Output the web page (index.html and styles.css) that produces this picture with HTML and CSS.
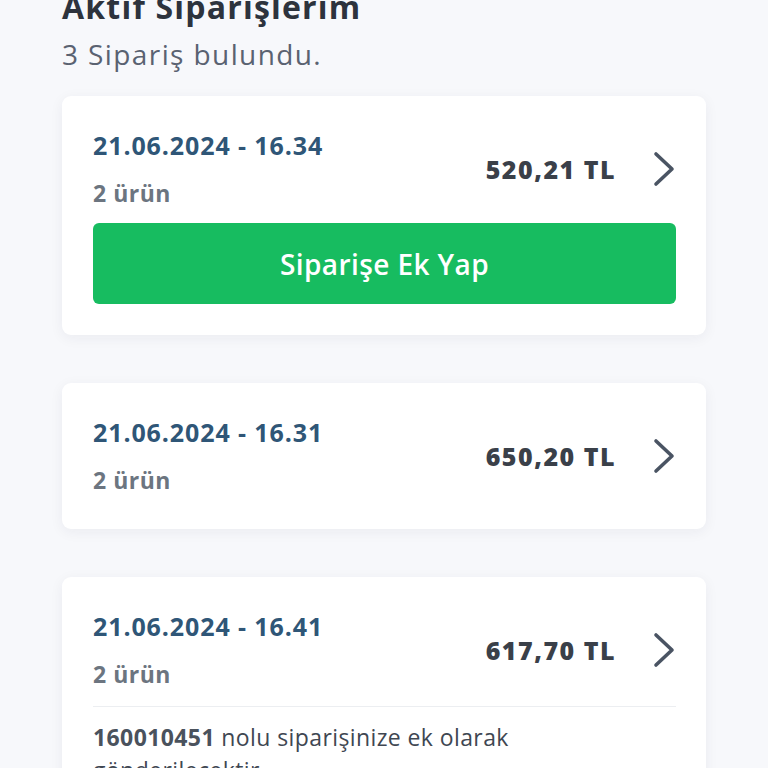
FILE: index.html
```html
<!DOCTYPE html>
<html lang="tr">
<head>
    <meta charset="UTF-8">
    <title>Aktif Siparişlerim</title>
    <link rel="stylesheet" href="styles.css">
</head>
<body>
<div class="page">
    <div class="page-head">
        <h1 class="page-title">Aktif Siparişlerim</h1>
        <p class="page-sub">3 Sipariş bulundu.</p>
    </div>

    <div class="order-card">
        <div class="order-row">
            <div class="order-info">
                <div class="order-date">21.06.2024 - 16.34</div>
                <div class="order-count">2 ürün</div>
            </div>
            <div class="order-price">520,21 TL</div>
            <svg class="order-arrow" width="24" height="36" viewBox="0 0 24 36">
                <polyline points="4,3 20,18 4,33" fill="none" stroke="#4a5463" stroke-width="3.6" stroke-linecap="round" stroke-linejoin="round"/>
            </svg>
        </div>
        <button class="btn-add">Siparişe Ek Yap</button>
    </div>

    <div class="order-card">
        <div class="order-row">
            <div class="order-info">
                <div class="order-date">21.06.2024 - 16.31</div>
                <div class="order-count">2 ürün</div>
            </div>
            <div class="order-price">650,20 TL</div>
            <svg class="order-arrow" width="24" height="36" viewBox="0 0 24 36">
                <polyline points="4,3 20,18 4,33" fill="none" stroke="#4a5463" stroke-width="3.6" stroke-linecap="round" stroke-linejoin="round"/>
            </svg>
        </div>
    </div>

    <div class="order-card">
        <div class="order-row">
            <div class="order-info">
                <div class="order-date">21.06.2024 - 16.41</div>
                <div class="order-count">2 ürün</div>
            </div>
            <div class="order-price">617,70 TL</div>
            <svg class="order-arrow" width="24" height="36" viewBox="0 0 24 36">
                <polyline points="4,3 20,18 4,33" fill="none" stroke="#4a5463" stroke-width="3.6" stroke-linecap="round" stroke-linejoin="round"/>
            </svg>
        </div>
        <div class="order-note">
            <b>160010451</b> nolu siparişinize ek olarak<br>gönderilecektir.
        </div>
    </div>
</div>
</body>
</html>
```

FILE: styles.css
```css
*{
    margin: 0;
    padding: 0;
    box-sizing: border-box;
}
html,body{
    background: #f7f8fb;
}
body{
    font-family: "Open Sans", "Noto Sans", sans-serif;
    color: #2e3440;
    overflow: hidden;
    height: 768px;
}
.page{
    padding: 0 62px;
    display: flex;
    flex-direction: column;
    gap: 48px;
}
.page-head{
    margin-top: -12px;
    margin-bottom: -25px;
}
.page-title{
    font-size: 32px;
    font-weight: 700;
    line-height: 38px;
    letter-spacing: 1.2px;
    color: #2d333d;
}
.page-sub{
    font-size: 28px;
    font-weight: 400;
    line-height: 38px;
    letter-spacing: 1.4px;
    margin-top: 9px;
    color: #5a6271;
}
.order-card{
    background: #fff;
    border-radius: 9px;
    padding: 31px 30px 31px 31px;
    box-shadow: 0 3px 14px rgba(30, 40, 70, 0.06);
    display: flex;
    flex-direction: column;
    gap: 12px;
}
.order-row{
    display: flex;
    align-items: center;
}
.order-info{
    flex: 1;
    display: flex;
    flex-direction: column;
    gap: 12px;
}
.order-date{
    font-size: 25px;
    font-weight: 700;
    line-height: 36px;
    letter-spacing: 0.9px;
    color: #2f5677;
}
.order-count{
    font-size: 23px;
    font-weight: 700;
    line-height: 36px;
    letter-spacing: 0.5px;
    color: #6c7580;
}
.order-price{
    font-size: 25px;
    font-weight: 800;
    letter-spacing: 1.5px;
    color: #3a4049;
    margin-right: 36px;
}
.order-arrow{
    display: block;
}
.btn-add{
    height: 81px;
    border: none;
    border-radius: 6px;
    background: #17bc60;
    color: #fff;
    font-family: inherit;
    font-size: 28px;
    font-weight: 600;
    letter-spacing: 0.4px;
    cursor: pointer;
}
.order-note{
    border-top: 1px solid #eceef1;
    margin-top: 2px;
    padding-top: 14px;
    font-size: 23px;
    line-height: 33px;
    letter-spacing: 0.4px;
    color: #3f4752;
}
.order-note b{
    color: #4a525d;
}
```
